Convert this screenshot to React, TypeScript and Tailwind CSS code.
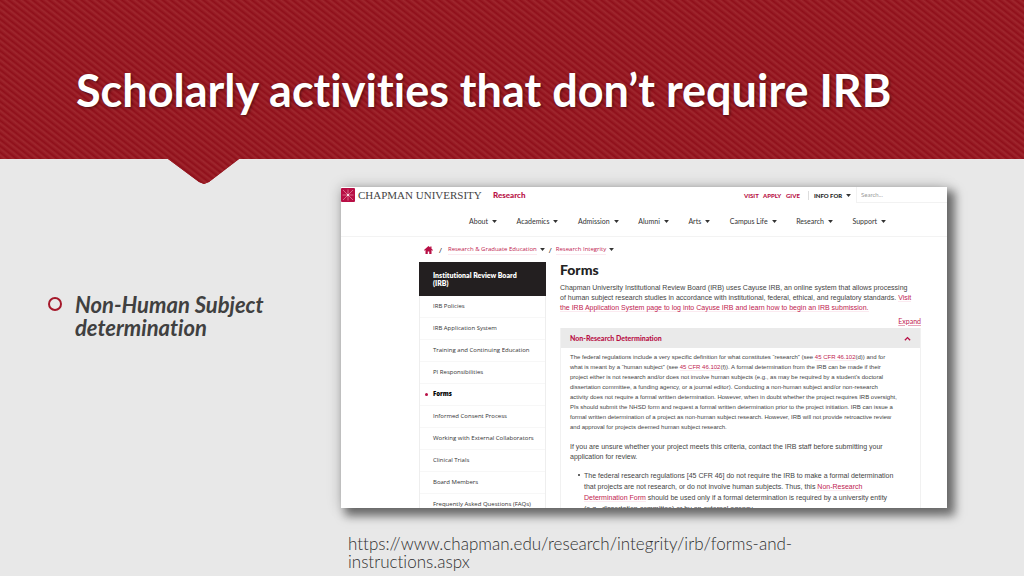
import { ReactNode } from "react";

const navItems = ["About", "Academics", "Admission", "Alumni", "Arts", "Campus Life", "Research", "Support"];

const sideItems = [
  "IRB Policies",
  "IRB Application System",
  "Training and Continuing Education",
  "PI Responsibilities",
  "Forms",
  "Informed Consent Process",
  "Working with External Collaborators",
  "Clinical Trials",
  "Board Members",
  "Frequently Asked Questions (FAQs)",
];

function Caret() {
  return (
    <svg viewBox="0 0 8 5" className="h-[3px] w-[5px] shrink-0 fill-[#333]" aria-hidden="true">
      <path d="M0 0h8L4 5z" />
    </svg>
  );
}

function Red({ children }: { children: ReactNode }) {
  return (
    <a href="#" className="border-b border-[#fbeaf0] text-[#c0224f]">
      {children}
    </a>
  );
}

function Logo() {
  return (
    <svg viewBox="0 0 28 28" className="size-[14px] shrink-0" aria-hidden="true">
      <rect width="28" height="28" rx="2" fill="#b80f45" />
      <g stroke="#e79ab2" strokeWidth="1.3">
        <path d="M14 14L4 4M14 14L24 4M14 14L4 24M14 14L24 24M14 14V3M14 14V25M14 14H3M14 14H25" />
      </g>
      <circle cx="14" cy="14" r="2" fill="#fff" />
    </svg>
  );
}

function SiteHeader() {
  return (
    <header className="border-b border-[#f3f3f3] bg-white">
      <div className="flex h-[16px] items-center">
        <Logo />
        <span className="ml-[3px] w-[135px] whitespace-nowrap font-['Liberation_Serif',serif] text-[11px] leading-[14px] text-[#444]">
          CHAPMAN UNIVERSITY
        </span>
        <a href="#" className="text-[8px] font-black text-[#b80f45]">Research</a>
        <div className="ml-auto flex h-full items-center text-[6px] font-black text-[#b80f45]">
          <a href="#" className="w-[19px]">VISIT</a>
          <a href="#" className="w-[23px]">APPLY</a>
          <a href="#" className="w-[22px]">GIVE</a>
          <button type="button" className="flex w-[48px] items-center gap-1 whitespace-nowrap border-l border-[#ddd] pl-[5px] text-[#222]">
            INFO FOR
            <Caret />
          </button>
          <input
            aria-label="Search"
            placeholder="Search..."
            className="h-full w-[91px] border-b border-l border-[#f2f2f2] px-1 text-[6px] font-normal placeholder:text-[#999]"
          />
        </div>
      </div>
      <nav className="flex h-[33px] items-center justify-between pl-[128px] pr-[61px] pt-[4px] text-[7px] text-[#333]">
        {navItems.map((label) => (
          <a key={label} href="#" className="flex items-center gap-1 whitespace-nowrap">
            {label}
            <Caret />
          </a>
        ))}
      </nav>
    </header>
  );
}

function Breadcrumb() {
  return (
    <nav aria-label="Breadcrumb" className="flex h-[25px] items-center pl-[83px] font-['Open_Sans',sans-serif] text-[6px] text-[#333]">
      <a href="#" aria-label="Home">
        <svg viewBox="0 0 18 16" className="h-2 w-[9px] fill-[#b80f45]" aria-hidden="true">
          <path d="M9 0L0 8l1.200 1.300L3 7.800V16h4.500v-5h3v5H15V7.800l1.800 1.500L18 8l-3-2.700V1h-2.500v2z" />
        </svg>
      </a>
      <span className="mx-[6px] text-[8px]">/</span>
      <Red>Research &amp; Graduate Education</Red>
      <span className="ml-[3px] mr-1"><Caret /></span>
      <span className="mr-1 text-[8px]">/</span>
      <Red>Research Integrity</Red>
      <span className="ml-[3px]"><Caret /></span>
    </nav>
  );
}

function SideMenu() {
  return (
    <aside className="w-[127px] shrink-0 border-x border-[#eee] text-[#333]">
      <h3 className="-mx-px flex h-[34px] items-center bg-[#231f20] pl-[14px] text-[7px] font-extrabold leading-2 text-white">
        Institutional Review Board
        <br />
        (IRB)
      </h3>
      <ul className="font-['Open_Sans',sans-serif] text-[6px]">
        {sideItems.map((item) => (
          <li key={item} className="flex h-[22px] items-center border-b border-[#f7f7f7] pl-[5px]">
            <span className={item === "Forms" ? "mr-[5px] size-[3px] rounded-full bg-[#b80f45]" : "mr-[5px] size-[3px]"} />
            <a href="#" className={item === "Forms" ? "font-extrabold text-black" : "whitespace-nowrap"}>{item}</a>
          </li>
        ))}
      </ul>
    </aside>
  );
}

function FormsArticle() {
  return (
    <article className="ml-[14px] w-[361px] shrink-0 whitespace-nowrap font-['Liberation_Sans',Arial,sans-serif] text-[7px] leading-[10px] text-[#444]">
      <h2 className="font-['Lato',sans-serif] text-[14px] font-black leading-4 text-[#222]">Forms</h2>
      <p className="mt-[5px]">
        Chapman University Institutional Review Board (IRB) uses Cayuse IRB, an online system that allows processing
        <br />
        of human subject research studies in accordance with institutional, federal, ethical, and regulatory standards.{" "}
        <Red>Visit</Red>
        <br />
        <Red>the IRB Application System page to log into Cayuse IRB and learn how to begin an IRB submission.</Red>
      </p>
      <div className="flex h-[15px] items-center justify-end font-['Lato',sans-serif]">
        <a href="#" className="text-[#c0224f] underline decoration-[#e9a5b9] underline-offset-1">Expand</a>
      </div>
      <section className="border-x border-[#f1f1f1]">
        <button type="button" className="flex h-5 w-full items-center justify-between bg-[#eaeaea] pl-[9px] pr-[9px] font-['Lato',sans-serif] font-black text-[#b80f45]">
          Non-Research Determination
          <svg viewBox="0 0 8 5" className="h-[5px] w-[7px] fill-none stroke-[#b80f45] stroke-[1.5]" aria-hidden="true">
            <path d="M1 4.500L4 1.500l3 3" />
          </svg>
        </button>
        <div className="pl-[9px] pt-[4px]">
          <p className="text-[6px]">
            The federal regulations include a very specific definition for what constitutes “research” (see <Red>45 CFR 46.102</Red>(d)) and for
            <br />
            what is meant by a “human subject” (see <Red>45 CFR 46.102</Red>(f)). A formal determination from the IRB can be made if their
            <br />
            project either is not research and/or does not involve human subjects (e.g., as may be required by a student’s doctoral
            <br />
            dissertation committee, a funding agency, or a journal editor). Conducting a non-human subject and/or non-research
            <br />
            activity does not require a formal written determination. However, when in doubt whether the project requires IRB oversight,
            <br />
            PIs should submit the NHSD form and request a formal written determination prior to the project initiation. IRB can issue a
            <br />
            formal written determination of a project as non-human subject research. However, IRB will not provide retroactive review
            <br />
            and approval for projects deemed human subject research.
          </p>
          <p className="mt-[10px]">
            If you are unsure whether your project meets this criteria, contact the IRB staff before submitting your
            <br />
            application for review.
          </p>
          <ul className="mt-[8px] leading-[11px]">
            <li className="flex">
              <span className="ml-[8px] mr-[4px] mt-[4px] size-[2px] rounded-full bg-[#333]" />
              <span>
                The federal research regulations [45 CFR 46] do not require the IRB to make a formal determination
                <br />
                that projects are not research, or do not involve human subjects. Thus, this <Red>Non-Research</Red>
                <br />
                <Red>Determination Form</Red> should be used only if a formal determination is required by a university entity
                <br />
                (e.g., dissertation committee) or by an external agency.
              </span>
            </li>
          </ul>
        </div>
      </section>
    </article>
  );
}

export default function App() {
  return (
    <div className="flex min-h-screen flex-col overflow-hidden bg-[#e8e8e8] font-['Lato',sans-serif] [font-variant-ligatures:no-common-ligatures]">
      <header className="flex h-[184px] items-start bg-[#981923] bg-[repeating-linear-gradient(38deg,#8f0f1a_0px,#9f272e_3px,#8f0f1a_5px)] pl-[76px] pt-[64px] [clip-path:polygon(0_0,100%_0,100%_159px,239px_159px,209px_182px,204px_184px,199px_182px,168px_159px,0_159px)]">
        <h1 className="whitespace-nowrap text-[45px] font-bold leading-[52px] text-white [text-shadow:1px_1px_3px_rgba(0,0,0,0.5)]">
          Scholarly activities that don’t require IRB
        </h1>
      </header>
      <main className="flex pt-[3px]">
        <ul className="w-[341px] shrink-0 pl-[48px] pt-[106px]">
          <li className="flex gap-[13px]">
            <span className="mt-[4px] size-[14px] shrink-0 rounded-full border-2 border-[#a5182a]" />
            <span className="text-[22px] font-bold italic leading-[23px] text-[#404040]">
              Non-Human Subject
              <br />
              determination
            </span>
          </li>
        </ul>
        <div className="mr-[77px] min-w-0 flex-1">
          <div className="h-[321px] overflow-hidden bg-white shadow-[6px_6px_9px_2px_rgba(0,0,0,0.5),0_0_14px_rgba(0,0,0,0.2)]">
            <SiteHeader />
            <Breadcrumb />
            <div className="flex pl-[78px]">
              <SideMenu />
              <FormsArticle />
            </div>
          </div>
          <a href="#" className="ml-[7px] mt-[27px] block whitespace-nowrap text-[17px] font-light leading-[18px] text-[#303030]">
            https://www.chapman.edu/research/integrity/irb/forms-and-
            <br />
            instructions.aspx
          </a>
        </div>
      </main>
    </div>
  );
}
